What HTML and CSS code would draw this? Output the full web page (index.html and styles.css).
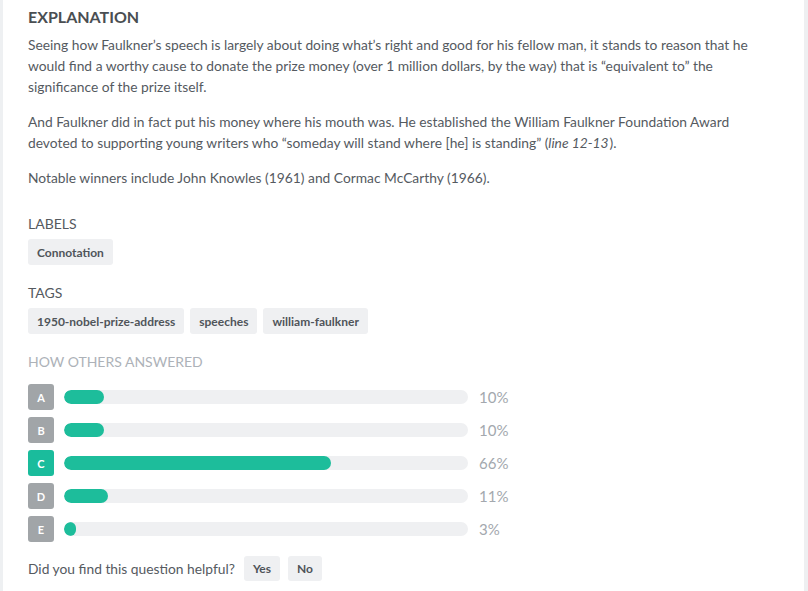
FILE: index.html
```html
<!DOCTYPE html>
<html lang="en">
<head>
<meta charset="utf-8">
<title>Explanation</title>
<link rel="stylesheet" href="styles.css">
</head>
<body>
<div class="page">
  <main class="content">
    <h2 class="title">EXPLANATION</h2>
    <p class="para">Seeing how Faulkner’s speech is largely about doing what’s right and good for his fellow man, it stands to reason that he would find a worthy cause to donate the prize money (over 1 million dollars, by the way) that is “equivalent to” the significance of the prize itself.</p>
    <p class="para">And Faulkner did in fact put his money where his mouth was. He established the William Faulkner Foundation Award devoted to supporting young writers who “someday will stand where [he] is standing” (<em class="ref">line 12-13</em>).</p>
    <p class="para">Notable winners include John Knowles (1961) and Cormac McCarthy (1966).</p>

    <h3 class="section-title">LABELS</h3>
    <div class="chips">
      <span class="chip">Connotation</span>
    </div>

    <h3 class="section-title">TAGS</h3>
    <div class="chips">
      <span class="chip">1950-nobel-prize-address</span>
      <span class="chip">speeches</span>
      <span class="chip">william-faulkner</span>
    </div>

    <h3 class="section-title muted">HOW OTHERS ANSWERED</h3>
    <div class="answers">
      <div class="answer">
        <span class="letter">A</span>
        <div class="track"><div class="fill" style="width:10%"></div></div>
        <span class="pct">10%</span>
      </div>
      <div class="answer">
        <span class="letter">B</span>
        <div class="track"><div class="fill" style="width:10%"></div></div>
        <span class="pct">10%</span>
      </div>
      <div class="answer">
        <span class="letter correct">C</span>
        <div class="track"><div class="fill" style="width:66%"></div></div>
        <span class="pct">66%</span>
      </div>
      <div class="answer">
        <span class="letter">D</span>
        <div class="track"><div class="fill" style="width:11%"></div></div>
        <span class="pct">11%</span>
      </div>
      <div class="answer">
        <span class="letter">E</span>
        <div class="track"><div class="fill" style="width:3%"></div></div>
        <span class="pct">3%</span>
      </div>
    </div>

    <div class="helpful">
      <span class="helpful-text">Did you find this question helpful?</span>
      <button class="btn">Yes</button>
      <button class="btn">No</button>
    </div>
  </main>
</div>
</body>
</html>
```
FILE: styles.css
```css
html, body {
  margin: 0;
  padding: 0;
  background: #ffffff;
}

body {
  font-family: Lato, "Open Sans", "Liberation Sans", sans-serif;
  color: #555a5f;
}

.page {
  min-height: 591px;
  border-left: 3px solid #eef0f2;
  border-right: 4px solid #eeeff1;
  box-sizing: border-box;
  width: 808px;
}

.content {
  padding: 7px 28px 0 25px;
}

.title {
  margin: 0;
  font-size: 16px;
  line-height: 20px;
  font-weight: 700;
  color: #4a4e52;
}

.para {
  margin: 7px 0 0;
  font-size: 13.8px;
  line-height: 21px;
  color: #555a5f;
}

.para + .para {
  margin-top: 14px;
}

.ref {
  padding-right: 1px;
}

.section-title {
  margin: 18px 0 0;
  font-size: 14px;
  line-height: 20px;
  font-weight: 400;
  color: #555a5f;
}

.para + .section-title {
  margin-top: 26px;
}

.section-title.muted {
  color: #adb2b8;
}

.chips {
  display: flex;
  gap: 6px;
  margin-top: 5px;
}

.chip {
  display: inline-flex;
  align-items: center;
  height: 26px;
  padding: 0 9px;
  background: #eff0f2;
  border-radius: 3px;
  font-size: 12px;
  font-weight: 700;
  color: #50555a;
}

.answers {
  display: flex;
  flex-direction: column;
  gap: 7px;
  margin-top: 12px;
}

.answer {
  display: flex;
  align-items: center;
  height: 26px;
}

.letter {
  width: 26px;
  height: 26px;
  border-radius: 3px;
  background: #a1a5a8;
  color: #ffffff;
  font-size: 11px;
  font-weight: 700;
  display: flex;
  align-items: center;
  justify-content: center;
  flex: none;
}

.letter.correct {
  background: #1abc9c;
}

.track {
  margin-left: 10px;
  width: 404px;
  height: 14px;
  background: #eff0f2;
  border-radius: 7px;
  overflow: hidden;
  flex: none;
}

.fill {
  height: 100%;
  min-width: 12px;
  background: #1dbd9b;
  border-radius: 7px;
}

.pct {
  margin-left: 11px;
  font-size: 15px;
  color: #a3a8ae;
}

.helpful {
  display: flex;
  align-items: center;
  margin-top: 14px;
}

.helpful-text {
  font-size: 13.8px;
  color: #555a5f;
  margin-right: 9px;
}

.btn {
  font-family: inherit;
  font-size: 12px;
  font-weight: 700;
  color: #4f5459;
  background: #eff0f2;
  border: none;
  border-radius: 3px;
  height: 25px;
  padding: 0 9px;
  margin-right: 8px;
  cursor: pointer;
}
```
